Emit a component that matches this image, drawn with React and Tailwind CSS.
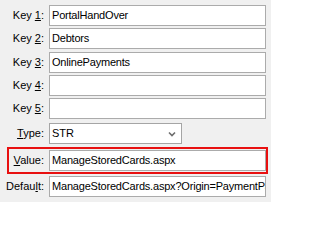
import React from "react";

function Label({ pre, acc, post, className = "w-[44px]" }) {
  return (
    <span className={`${className} shrink-0 text-right text-[11px] text-black leading-none`}>
      {pre}
      <span className="underline underline-offset-[1px]">{acc}</span>
      {post}
    </span>
  );
}

function Field({ value, width = "w-[217px]" }) {
  return (
    <div
      className={`${width} h-[21px] ml-[5px] flex items-center bg-white border border-[#ababab] pl-[2px] text-[11px] tracking-[-0.2px] text-black overflow-hidden whitespace-nowrap`}
    >
      {value}
    </div>
  );
}

export default function App() {
  const keys = [
    { n: "1", v: "PortalHandOver", mt: "mt-[5px]" },
    { n: "2", v: "Debtors", mt: "mt-[2px]" },
    { n: "3", v: "OnlinePayments", mt: "mt-[3px]" },
    { n: "4", v: "", mt: "mt-[2px]" },
    { n: "5", v: "", mt: "mt-[2px]" },
  ];

  return (
    <div
      className="w-[271px] h-[202px] bg-[#f0f0f0] overflow-hidden flex flex-col"
      style={{ fontFamily: '"Liberation Sans", Arial, sans-serif' }}
    >
      {keys.map((k) => (
        <div key={k.n} className={`flex items-center ${k.mt}`}>
          <Label pre="Key " acc={k.n} post=":" />
          <Field value={k.v} />
        </div>
      ))}

      {/* Type */}
      <div className="flex items-center mt-[4px]">
        <Label pre="" acc="T" post="ype:" />
        <div className="w-[133px] h-[21px] ml-[5px] flex items-center justify-between bg-white border border-[#a5a5a5] pl-[2px] pr-[5px] text-[11px] text-black">
          <span>STR</span>
          <svg width="8" height="6" viewBox="0 0 8 6">
            <path d="M1 1.5 L4 4.5 L7 1.5" fill="none" stroke="#6d6d6d" strokeWidth="1.6" />
          </svg>
        </div>
      </div>

      {/* Value (highlighted) */}
      <div className="ml-[7px] mt-[3px] w-[261px] h-[27px] border-2 border-[#e81010] flex items-center">
        <Label pre="" acc="V" post="alue:" className="w-[35px]" />
        <Field value="ManageStoredCards.aspx" />
      </div>

      {/* Default */}
      <div className="flex items-center mt-[2px]">
        <Label pre="Defau" acc="l" post="t:" />
        <Field value="ManageStoredCards.aspx?Origin=PaymentPage" />
      </div>
    </div>
  );
}
